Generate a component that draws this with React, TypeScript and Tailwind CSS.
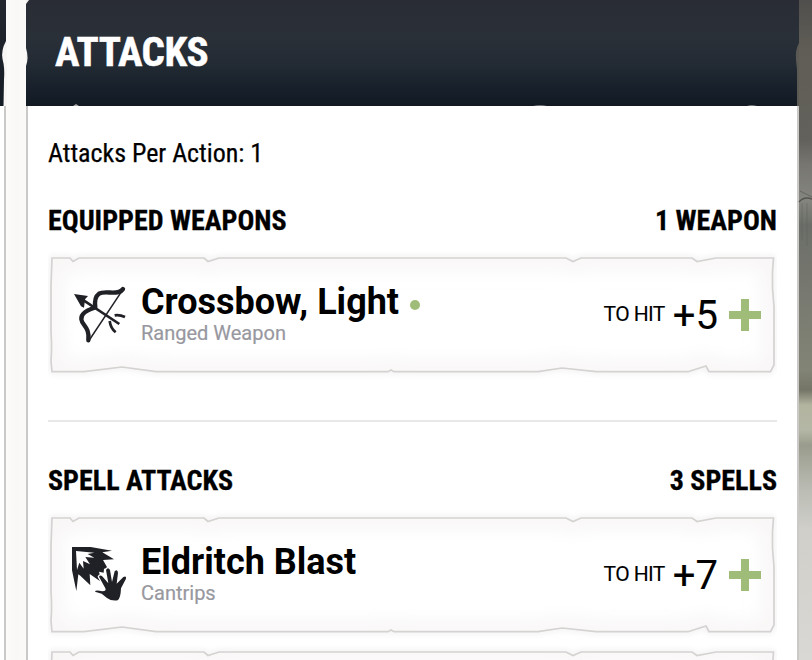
import type { ReactNode } from "react";

const CONDENSED = "font-['Roboto_Condensed','Roboto',sans-serif] [font-stretch:75%]";

const OUTLINE =
  "M4 8 H22 L25 11.5 L31 8 H156 L160 11.5 L171 8 H518 L525 11.5 L533 8 H644 L649 11.5 L668 8 H725.500 L724.500 22 L724.500 38 L726 57 V115 L722.500 121.7 H661 L658 116 L640 121.7 H548 L514 118 L490 121.7 H346 L343 120 L340 121.7 H108 L74 117 L36 121.7 H4 L3 111 L3.500 101 V92 L3 82 V35 Z";

function TornFrame() {
  return (
    <svg className="absolute inset-0" width="729" height="130" viewBox="0 0 729 130" fill="none">
      <defs>
        <filter id="paper-glow" x="-5%" y="-20%" width="110%" height="140%">
          <feGaussianBlur stdDeviation="3" />
        </filter>
        <filter id="paper-shade" x="-5%" y="-20%" width="110%" height="140%">
          <feGaussianBlur stdDeviation="9" />
        </filter>
        <clipPath id="paper-clip">
          <path d={OUTLINE} />
        </clipPath>
      </defs>
      <path d={OUTLINE} stroke="#ece8e8" strokeWidth="3" filter="url(#paper-glow)" />
      <path d={OUTLINE} fill="#ffffff" />
      <g clipPath="url(#paper-clip)">
        <path d={OUTLINE} stroke="#f8f5f5" strokeWidth="20" filter="url(#paper-shade)" />
      </g>
      <path d={OUTLINE} stroke="#d5d2d2" strokeWidth="1.7" />
    </svg>
  );
}

function BowIcon() {
  return (
    <svg className="absolute left-[17px] top-[25px]" width="70" height="75" viewBox="0 0 210 225" fill="none" stroke="#202126">
      <path d="M174 42 C160 64 121 44 102 56 C88 66 89 83 91 97 C72 105 47 112 49 133 C51 151 75 157 70 196" strokeWidth="13" strokeLinecap="round" strokeLinejoin="round" />
      <path d="M174 43 L71 198" strokeWidth="4.500" />
      <path d="M48 71 L163 147" strokeWidth="8" />
      <path d="M27 57 L69 63 L60 73 L57 98 L48 94 Z" fill="#202126" stroke="none" />
      <path d="M149 121 Q163 118 180 126" strokeWidth="8" />
      <path d="M134 138 Q137 160 152 172" strokeWidth="8" />
    </svg>
  );
}

function BlastIcon() {
  return (
    <svg className="absolute left-[17px] top-[28px]" width="70" height="70" viewBox="0 0 210 210">
      <path
        fill="#202126"
        d="M21 27 L77 27 L141 38 L112 43 L147 64 L114 66 L128 91 L117 92 L116 104 L102 101 L110 133 L74 108 L76 142 L46 113 L40 109 L34 159 L21 97 Z"
      />
      <path fill="#fff" d="M33 39 L88 44 L68 48 L88 59 L61 57 L75 79 L54 69 L56 92 L43 74 L36 96 Z" />
      <path
        fill="#202126"
        stroke="#fff"
        strokeWidth="8"
        strokeLinejoin="round"
        paintOrder="stroke"
        d="M90 161 Q91 155 112 160 Q125 160 121 151 L102 116 Q105 109 113 116 L130 136 L123 96 Q129 86 135 96 L141 132 L149 100 Q158 92 159 105 L155 137 L175 117 Q185 113 183 122 L168 151 Q167 181 158 187 Q139 190 126 180 L110 167 Z"
      />
    </svg>
  );
}

function AttackCard(props: { icon: ReactNode; name: string; kind: string; bonus: string; dot?: boolean }) {
  return (
    <div className="relative flex h-[130px] w-[729px] shrink-0">
      <TornFrame />
      {props.icon}
      <div className="relative ml-[93px] pt-[31px]">
        <div className="flex items-center">
          <span className="whitespace-nowrap text-[36px] font-bold leading-[42px]">{props.name}</span>
          {props.dot && <span className="ml-[11px] mt-[6px] size-[10px] rounded-full bg-[#9fbd78]" />}
        </div>
        <div className="text-[20px] leading-[20px] text-[#98989f] [-webkit-text-stroke:0.2px]">{props.kind}</div>
      </div>
      <div className="relative ml-auto mr-[16px] flex items-center">
        <span className="mr-[8px] text-[21px] tracking-[-0.6px] [-webkit-text-stroke:0.1px]">TO HIT</span>
        <span className="mr-[11px] pt-[2px] text-[40px] [-webkit-text-stroke:0.1px]">{props.bonus}</span>
        <svg width="32" height="32" viewBox="0 0 32 32">
          <path d="M12 0H20V12H32V20H20V32H12V20H0V12H12Z" fill="#9fbd78" />
        </svg>
      </div>
    </div>
  );
}

function SectionHeading(props: { title: string; count: string }) {
  return (
    <div className={`flex h-[30px] items-center justify-between pt-[2px] text-[28px] font-bold leading-[30px] [-webkit-text-stroke:0.3px] ${CONDENSED}`}>
      <h2>{props.title}</h2>
      <span>{props.count}</span>
    </div>
  );
}

export default function App() {
  return (
    <div className="relative flex h-[660px] w-[812px] overflow-hidden bg-[#fbfaf9] font-['Roboto',sans-serif] text-black">
      <div className="flex w-[6px] shrink-0 flex-col">
        <div className="h-[106px] bg-gradient-to-b from-[#24272f] to-[#141c25]" />
        <div className="flex-1 border-r-2 border-[#cbc9c8] bg-white" />
      </div>
      <div className="w-[20px] shrink-0 bg-gradient-to-r from-[#fcfbfa] via-[#faf8f7] to-[#fbfaf9]" />
      <main className="flex w-[773px] shrink-0 flex-col">
        <header className="flex h-[106px] shrink-0 items-center bg-[linear-gradient(180deg,#292c34_0%,#2a3038_35%,#222a33_62%,#151e29_88%,#121923_100%)] pb-[2px] pl-[29px]">
          <h1 className={`text-[41px] font-bold leading-[48px] tracking-[-0.5px] text-white [-webkit-text-stroke:0.5px] ${CONDENSED}`}>ATTACKS</h1>
        </header>
        <section className="flex flex-1 flex-col overflow-hidden border-x-2 border-[#cbc9c7] bg-white px-[20px] pt-[32px]">
          <p className={`text-[26px] leading-[30px] tracking-[-0.03px] [-webkit-text-stroke:0.25px] ${CONDENSED}`}>Attacks Per Action: 1</p>
          <div className="h-[37px] shrink-0" />
          <SectionHeading title="EQUIPPED WEAPONS" count="1 WEAPON" />
          <div className="h-[15px] shrink-0" />
          <AttackCard icon={<BowIcon />} name="Crossbow, Light" kind="Ranged Weapon" bonus="+5" dot />
          <hr className="mb-[43px] mt-[40px] border-t-2 border-[#e9e8e7]" />
          <SectionHeading title="SPELL ATTACKS" count="3 SPELLS" />
          <div className="h-[15px] shrink-0" />
          <AttackCard icon={<BlastIcon />} name="Eldritch Blast" kind="Cantrips" bonus="+7" />
          <div className="relative mt-[4px] h-[130px] shrink-0">
            <TornFrame />
          </div>
        </section>
      </main>
      <div className="flex-1 bg-[linear-gradient(180deg,#504f4d_0px,#5f5d55_50px,#62615b_140px,#777670_165px,#85857f_200px,#6b6e68_225px,#777970_290px,#828476_370px,#747567_390px,#b2b49f_405px,#b5b7a6_430px,#999c8c_445px,#bbbcb4_490px,#d0cfca_530px,#d9d8d4_660px)]" />
      <svg className="pointer-events-none absolute inset-0" width="812" height="660" fill="none">
        <path d="M6 41 Q1 50 2.500 59 Q5 68 4 80 L3.500 106 H7 V41Z" fill="#f8f6f5" />
        <path d="M26 48 Q29 58 26 66Z M26 0 H29 L26 4Z" fill="#f4f2f1" />
        <path d="M799 43 Q795 50 796 60 L797 70 V106 H799Z" fill="#5b5953" />
        <path d="M73 106 L76 104 L79 106Z" fill="#aaa9a8" />
        <path d="M533 106 Q540 104 547 106Z M747 106 Q751 104 757 106Z" fill="#77787a" />
        <path d="M799 202 Q804 196 812 199" stroke="#55544e" strokeWidth="1.500" />
        <path d="M800 191 L812 197" stroke="#66655f" strokeWidth="1" />
        <path d="M802 203 V240 M807 203 V246" stroke="#5c5c56" strokeOpacity=".2" strokeWidth="2" />
      </svg>
    </div>
  );
}
